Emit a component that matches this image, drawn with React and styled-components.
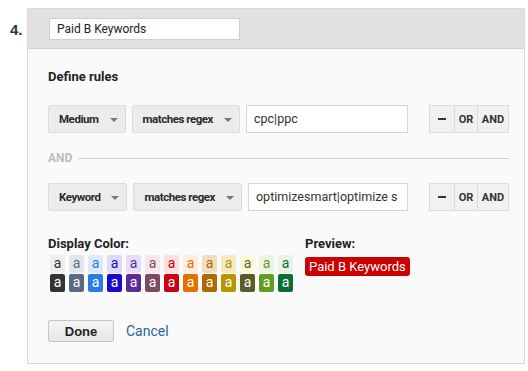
import React from 'react';
import styled, { createGlobalStyle } from 'styled-components';

const GlobalStyle = createGlobalStyle`
  body {
    margin: 0;
    background: #fff;
    font-family: Roboto, "Liberation Sans", Arial, sans-serif;
    color: #222;
  }
`;

const Page = styled.div`
  display: flex;
  padding-top: 8px;
  width: 525px;
`;

const Step = styled.div`
  flex: none;
  width: 27px;
  box-sizing: border-box;
  padding: 13px 0 0 10px;
  font-family: "Liberation Sans", Arial, sans-serif;
  font-weight: 700;
  font-size: 15px;
  color: #333;
`;

const Panel = styled.div`
  flex: none;
  width: 498px;
  box-sizing: border-box;
  border: 1px solid #d8d8d8;
  background: #fafafa;
`;

const Header = styled.div`
  height: 40px;
  background: #e2e2e2;
  border-bottom: 1px solid #d4d4d4;
  box-sizing: border-box;
  padding: 9px 0 0 21px;
`;

const NameInput = styled.div`
  width: 191px;
  height: 22px;
  box-sizing: border-box;
  background: #fff;
  border: 1px solid #cfcfcf;
  padding: 0 7px;
  font-size: 12px;
  line-height: 20px;
  color: #222;
`;

const Body = styled.div`
  padding: 20px 15px 21px 20px;
`;

const Title = styled.div`
  font-size: 13px;
  font-weight: 700;
  color: #222;
  line-height: 16px;
`;

const Rule = styled.div`
  display: flex;
  align-items: center;
  margin-top: ${p => p.$top}px;
`;

const Select = styled.div`
  flex: none;
  display: flex;
  align-items: center;
  height: 28px;
  box-sizing: border-box;
  padding: 0 7px 0 10px;
  margin-right: 6px;
  background: #ececec;
  border: 1px solid #dcdcdc;
  border-radius: 2px;
  font-size: 11.5px;
  font-weight: 700;
  letter-spacing: -0.45px;
  color: #2a2a2a;
  white-space: nowrap;
`;

const Caret = styled.span`
  margin-left: 11px;
  width: 0;
  height: 0;
  border-left: 4px solid transparent;
  border-right: 4px solid transparent;
  border-top: 4px solid #777;
  margin-top: 2px;
`;

const ValueInput = styled.div`
  flex: 1;
  min-width: 0;
  height: 28px;
  box-sizing: border-box;
  background: #fff;
  border: 1px solid #d6d6d6;
  padding: 0 7px;
  font-size: 12.5px;
  line-height: 26px;
  color: #333;
  white-space: nowrap;
  overflow: hidden;
  margin-right: 21px;
`;

const Segments = styled.div`
  flex: none;
  display: flex;
  height: 28px;
  box-sizing: border-box;
  border: 1px solid #dcdcdc;
  background: #f1f1f1;
`;

const Segment = styled.div`
  width: ${p => p.$w}px;
  display: flex;
  align-items: center;
  justify-content: center;
  font-size: 11px;
  font-weight: 700;
  color: #333;
  & + & {
    border-left: 1px solid #dcdcdc;
  }
`;

const Minus = styled.span`
  width: 8px;
  height: 2px;
  background: #333;
`;

const Divider = styled.div`
  display: flex;
  align-items: center;
  margin: 17px 0 17px;
  height: 16px;
  font-size: 12px;
  font-weight: 700;
  color: #bdbdbd;
  &::after {
    content: '';
    flex: 1;
    height: 1px;
    background: #cfcfcf;
    margin-left: 6px;
  }
`;

const Bottom = styled.div`
  display: flex;
  gap: 12px;
  margin-top: 25px;
`;

const Label = styled.div`
  font-size: 13px;
  font-weight: 700;
  color: #222;
  line-height: 16px;
  margin-bottom: 3px;
`;

const SwatchRow = styled.div`
  display: flex;
  gap: 4px;
  margin-left: 2px;
  & + & {
    margin-top: 1px;
  }
`;

const Swatch = styled.div`
  width: 15px;
  height: 18px;
  border-radius: 2px;
  background: ${p => p.$bg};
  color: ${p => p.$fg};
  font-size: 14px;
  line-height: 17px;
  text-align: center;
`;

const Badge = styled.div`
  display: inline-block;
  margin-top: 2px;
  background: #cc0000;
  color: #fff;
  font-size: 13px;
  line-height: 19px;
  padding: 0 4px;
  border-radius: 3px;
`;

const Actions = styled.div`
  display: flex;
  align-items: center;
  gap: 12px;
  margin-top: 28px;
`;

const DoneButton = styled.div`
  width: 66px;
  height: 22px;
  box-sizing: border-box;
  border: 1px solid #c6c6c6;
  border-radius: 2px;
  background: linear-gradient(#f6f6f6, #e6e6e6);
  font-family: "Liberation Sans", Arial, sans-serif;
  font-size: 13px;
  font-weight: 700;
  color: #222;
  display: flex;
  align-items: center;
  justify-content: center;
`;

const CancelLink = styled.a`
  font-size: 14px;
  color: #2a64a0;
  text-decoration: none;
`;

const palette = [
  ['#eeeeee', '#333333'],
  ['#e2e5eb', '#5b6a82'],
  ['#dde8fb', '#2b7be6'],
  ['#dcdcf8', '#1a0acb'],
  ['#e7ddf6', '#5d2a9e'],
  ['#f7e6ee', '#7b4a63'],
  ['#fbdfe0', '#cc0010'],
  ['#fdeedd', '#e57000'],
  ['#f6dcbf', '#b06800'],
  ['#f3eac0', '#b89600'],
  ['#fbfbd9', '#5b5b2a'],
  ['#ebf5df', '#5f9e1f'],
  ['#e9f1e9', '#0b6e33'],
];

function RuleRow({ field, value, top }) {
  return (
    <Rule $top={top}>
      <Select>{field}<Caret /></Select>
      <Select>matches regex<Caret /></Select>
      <ValueInput>{value}</ValueInput>
      <Segments>
        <Segment $w={24}><Minus /></Segment>
        <Segment $w={22}>OR</Segment>
        <Segment $w={30}>AND</Segment>
      </Segments>
    </Rule>
  );
}

export default function App() {
  return (
    <>
      <GlobalStyle />
      <Page>
        <Step>4.</Step>
        <Panel>
          <Header>
            <NameInput>Paid B Keywords</NameInput>
          </Header>
          <Body>
            <Title>Define rules</Title>
            <RuleRow field="Medium" value="cpc|ppc" top={20} />
            <Divider>AND</Divider>
            <RuleRow field="Keyword" value="optimizesmart|optimize s" top={0} />
            <Bottom>
              <div>
                <Label>Display Color:</Label>
                <SwatchRow>
                  {palette.map(([light, dark], i) => (
                    <Swatch key={i} $bg={light} $fg={dark}>a</Swatch>
                  ))}
                </SwatchRow>
                <SwatchRow>
                  {palette.map(([light, dark], i) => (
                    <Swatch key={i} $bg={dark} $fg="#fff">a</Swatch>
                  ))}
                </SwatchRow>
              </div>
              <div>
                <Label>Preview:</Label>
                <Badge>Paid B Keywords</Badge>
              </div>
            </Bottom>
            <Actions>
              <DoneButton>Done</DoneButton>
              <CancelLink href="#">Cancel</CancelLink>
            </Actions>
          </Body>
        </Panel>
      </Page>
    </>
  );
}
